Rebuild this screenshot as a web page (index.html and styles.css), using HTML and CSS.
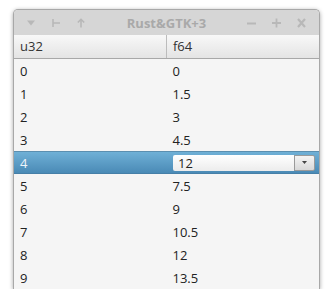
FILE: index.html
```html
<!DOCTYPE html>
<html>
<head><meta charset="utf-8"><link rel="stylesheet" href="styles.css"></head>
<body>
<div class="win">
  <div class="titlebar">
    <div class="tb-left">
      <svg width="8" height="8" viewBox="0 0 8 8"><path d="M0 1.5h8L4 6.5z" fill="#b8b8b8"/></svg>
      <svg width="8" height="10" viewBox="0 0 8 10"><path d="M1 1v8M1 5h7" stroke="#b8b8b8" stroke-width="1.6" fill="none"/></svg>
      <svg width="8" height="10" viewBox="0 0 8 10"><path d="M4 9.5V1.5M0.8 4.5L4 1.3 7.2 4.5" stroke="#b8b8b8" stroke-width="1.6" fill="none"/></svg>
    </div>
    <div class="title">Rust&amp;GTK+3</div>
    <div class="tb-right">
      <svg width="9" height="10" viewBox="0 0 9 10"><path d="M0 5.5h9" stroke="#b8b8b8" stroke-width="1.8"/></svg>
      <svg width="9" height="10" viewBox="0 0 9 10"><path d="M0 5h9M4.5 0.5v9" stroke="#b8b8b8" stroke-width="1.8"/></svg>
      <svg width="9" height="10" viewBox="0 0 9 10"><path d="M1 1l7 8M8 1l-7 8" stroke="#b8b8b8" stroke-width="2.2"/></svg>
    </div>
  </div>
  <div class="header">
    <div class="hcell">u32</div>
    <div class="hcell second">f64</div>
  </div>
  <div class="rows">
    <div class="row"><span>0</span><span>0</span></div>
    <div class="row"><span>1</span><span>1.5</span></div>
    <div class="row"><span>2</span><span>3</span></div>
    <div class="row"><span>3</span><span>4.5</span></div>
    <div class="row sel"><span>4</span>
      <div class="combo"><div class="entry">12</div><div class="btn"><svg width="5" height="3" viewBox="0 0 5 3"><path d="M0 0h5L2.5 3z" fill="#444"/></svg></div></div>
    </div>
    <div class="row"><span>5</span><span>7.5</span></div>
    <div class="row"><span>6</span><span>9</span></div>
    <div class="row"><span>7</span><span>10.5</span></div>
    <div class="row"><span>8</span><span>12</span></div>
    <div class="row"><span>9</span><span>13.5</span></div>
  </div>
</div>
</body>
</html>
```
FILE: styles.css
```css
html, body { margin: 0; padding: 0; background: #fff; }
body { padding: 9px 0 0 13px; font-family: "Open Sans", "Noto Sans", sans-serif; }
.win {
  width: 307px;
  height: 280px;
  box-sizing: border-box;
  border: 1px solid #a8a8a8;
  border-bottom: none;
  border-radius: 5px 5px 0 0;
  background: #f5f5f5;
  box-shadow: 0 1px 4px rgba(0,0,0,0.35);
  overflow: hidden;
  display: flex;
  flex-direction: column;
}
.titlebar {
  flex: 0 0 25px;
  background: #d6d6d6;
  display: flex;
  align-items: center;
  justify-content: space-between;
  padding: 0 13px 0 13px;
  position: relative;
}
.tb-left { display: flex; align-items: center; gap: 17px; }
.tb-right { display: flex; align-items: center; gap: 16px; }
.title {
  position: absolute; left: 0; right: 0; text-align: center;
  font-size: 13px; font-weight: bold; color: #a9a9a9;
  top: 4px;
}
.header {
  flex: 0 0 24px;
  box-sizing: border-box;
  display: flex;
  background: linear-gradient(#f8f8f8, #e4e4e4);
  border-bottom: 1px solid #a8a8a8;
  font-size: 13px;
  color: #333;
}
.hcell { width: 153px; box-sizing: border-box; padding-left: 6px; line-height: 23px; border-right: 1px solid #bcbcbc; }
.hcell.second { border-right: none; flex: 1; }
.rows { display: flex; flex-direction: column; flex: 0 0 auto; }
.row {
  height: 23px;
  flex: 0 0 23px;
  display: flex;
  align-items: center;
  font-size: 13px;
  color: #222;
}
.row span { width: 153px; padding-left: 6px; box-sizing: border-box; }
.row.sel {
  background: linear-gradient(#6fb0d6, #4a8ab6);
  border-top: 1px solid #5b8fb0;
  border-bottom: 1px solid #467fa7;
  color: #eef4fa;
  box-sizing: border-box;
}
.combo {
  display: flex;
  width: 142px;
  height: 16px;
  margin-left: 6px;
}
.entry {
  flex: 1;
  background: linear-gradient(#ffffff, #ececec);
  color: #222;
  font-size: 13px;
  line-height: 16px;
  padding-left: 5px;
  border-radius: 2px 0 0 2px;
}
.btn {
  width: 21px;
  box-sizing: border-box;
  border: 1px solid #9a9a9a;
  border-radius: 0 2px 2px 0;
  background: linear-gradient(#f4f4f4, #d8d8d8);
  display: flex; align-items: center; justify-content: center;
}
```
